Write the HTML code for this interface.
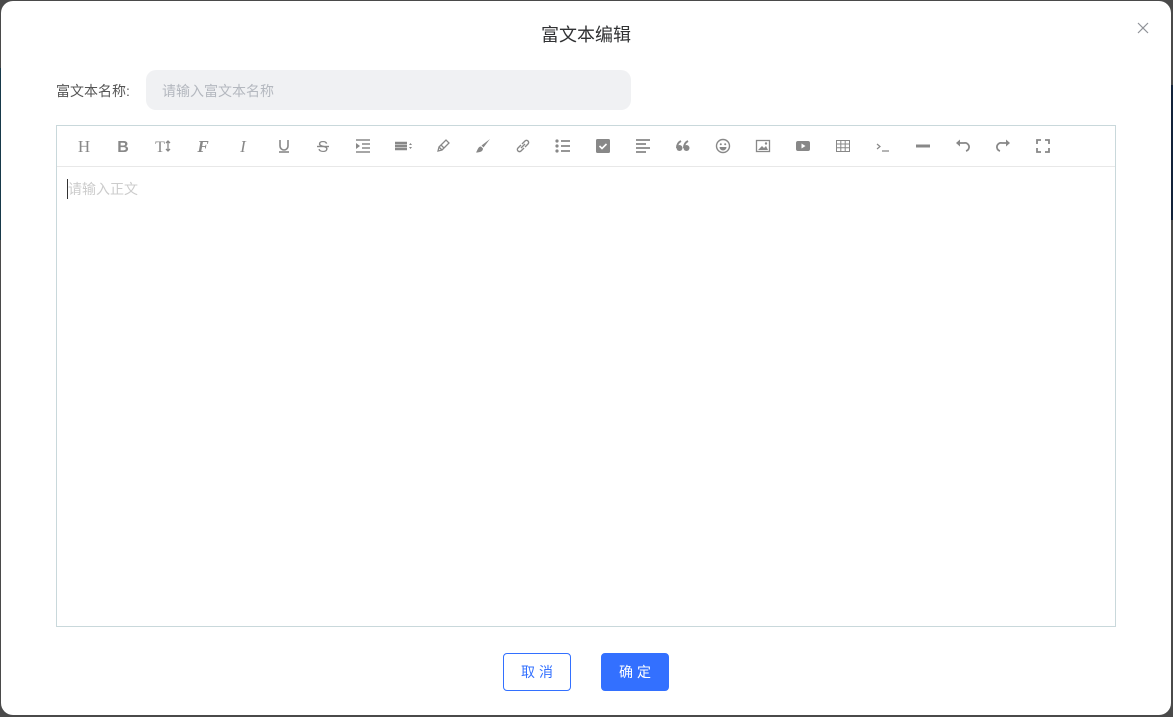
<!DOCTYPE html>
<html><head><meta charset="utf-8"><style>
*{margin:0;padding:0;box-sizing:border-box}
body{width:1173px;height:717px;background:#4a4a4a;position:relative;overflow:hidden;font-family:"Liberation Sans","Noto Sans CJK SC",sans-serif}
.lt{position:absolute;left:0;top:68px;width:3px;height:172px;background:#17394a}
.rt{position:absolute;right:0;top:85px;width:3px;height:135px;background:#13233a}
.dlg{position:absolute;left:1px;top:1px;width:1170px;height:714px;background:#fff;border-radius:12px}
.title{position:absolute;top:20px;left:0;width:100%;text-align:center;font-size:18px;color:#303133}
.close{position:absolute;left:1135px;top:20px;width:14px;height:14px}
.lbl{position:absolute;left:55px;top:80px;font-size:14px;color:#555}
.inp{position:absolute;left:145px;top:69px;width:485px;height:40px;background:#f0f1f3;border-radius:10px;font-size:14px;color:#b4b8bf;padding:11px 16px}
.ed{position:absolute;left:56px;top:125px;width:1060px;height:502px;border:1px solid #c9d8db}
.tb{height:41px;border-bottom:1px solid #e8e8e8;position:relative}
.tb svg{position:absolute;top:12px}
.ph{position:absolute;left:10px;top:53px;font-size:14px;color:#ccc;border-left:1px solid #333;padding-left:0}
.btn{position:absolute;top:653px;width:68px;height:38px;border-radius:4px;font-size:14px;text-align:center;line-height:36px;letter-spacing:4px;text-indent:4px}
.c{left:503px;border:1px solid #3370ff;color:#3370ff;background:#fff}
.o{left:601px;background:#3370ff;color:#fff;border:1px solid #3370ff}
</style></head><body>
<div class="lt"></div><div class="rt"></div>
<div class="dlg">
<div class="title">富文本编辑</div>
<svg class="close" viewBox="0 0 14 14"><path d="M2 2L12 12M12 2L2 12" stroke="#909399" stroke-width="1.2"/></svg>
<div class="lbl">富文本名称:</div>
<div class="inp">请输入富文本名称</div>
</div>
<div class="ed">
<div class="tb">
<svg style="left:19px" width="16" height="16" viewBox="0 0 16 16"><text x="8" y="14" font-size="17" font-family="Liberation Serif" text-anchor="middle" fill="#888">H</text></svg>
<svg style="left:58px" width="16" height="16" viewBox="0 0 16 16"><text x="8" y="14" font-size="16" font-weight="bold" font-family="Liberation Sans" text-anchor="middle" fill="#888">B</text></svg>
<svg style="left:97px" width="18" height="16" viewBox="0 0 18 16"><text x="6" y="14" font-size="16" font-family="Liberation Serif" text-anchor="middle" fill="#888">T</text><path d="M14 3v10M12 5l2-2 2 2M12 11l2 2 2-2" stroke="#888" fill="none" stroke-width="1.3"/></svg>
<svg style="left:138px" width="16" height="16" viewBox="0 0 16 16"><text x="8" y="14" font-size="17" font-style="italic" font-weight="bold" font-family="Liberation Serif" text-anchor="middle" fill="#888">F</text></svg>
<svg style="left:178px" width="16" height="16" viewBox="0 0 16 16"><text x="8" y="14" font-size="17" font-style="italic" font-family="Liberation Serif" text-anchor="middle" fill="#888">I</text></svg>
<svg style="left:219px" width="16" height="16" viewBox="0 0 16 16"><path d="M4 2v6a4 4 0 0 0 8 0V2" stroke="#888" fill="none" stroke-width="1.6"/><path d="M3 14h10" stroke="#888" stroke-width="1.6"/></svg>
<svg style="left:258px" width="16" height="16" viewBox="0 0 16 16"><text x="8" y="14" font-size="16" font-family="Liberation Sans" text-anchor="middle" fill="#888">S</text><path d="M2 8.5h12" stroke="#888" stroke-width="1.4"/></svg>
<svg style="left:298px" width="16" height="16" viewBox="0 0 16 16"><path d="M1 2h14M7 6h8M7 10h8M1 14h14" stroke="#888" stroke-width="1.6"/><path d="M1 5l4 3-4 3z" fill="#888"/></svg>
<svg style="left:337px" width="18" height="16" viewBox="0 0 18 16"><path d="M1 5h12M1 8h12M1 11h12" stroke="#888" stroke-width="2.4"/><path d="M15 7l1.5-2 1.5 2zM15 9l1.5 2 1.5-2z" fill="#888"/></svg>
<svg style="left:378px" width="16" height="16" viewBox="0 0 16 16"><path d="M3 13l1-4 7-7 3 3-7 7zM4 9l3 3M6 7l3 3" stroke="#888" fill="none" stroke-width="1.3"/></svg>
<svg style="left:418px" width="16" height="16" viewBox="0 0 16 16"><path d="M15 1L8.5 9.5 6.5 7.5z" fill="#888"/><path d="M6 8.5c-3 0-3 3-5 6 4 0 7-1 7-4z" fill="#888"/></svg>
<svg style="left:458px" width="16" height="16" viewBox="0 0 16 16"><path d="M6 10l4-4M6 7l-3 3a2.1 2.1 0 0 0 3 3l3-3M10 9l3-3a2.1 2.1 0 0 0-3-3L7 6" stroke="#888" fill="none" stroke-width="1.4"/></svg>
<svg style="left:498px" width="16" height="16" viewBox="0 0 16 16"><circle cx="2" cy="3" r="1.6" fill="#888"/><circle cx="2" cy="8" r="1.6" fill="#888"/><circle cx="2" cy="13" r="1.6" fill="#888"/><path d="M6 3h9M6 8h9M6 13h9" stroke="#888" stroke-width="1.8"/></svg>
<svg style="left:538px" width="16" height="16" viewBox="0 0 16 16"><rect x="1" y="1" width="14" height="14" rx="1.5" fill="#888"/><path d="M4.5 8l2.5 2.5 4.5-4.5" stroke="#fff" fill="none" stroke-width="1.6"/></svg>
<svg style="left:578px" width="16" height="16" viewBox="0 0 16 16"><path d="M1 2h14M1 6h10M1 10h14M1 14h10" stroke="#888" stroke-width="1.8"/></svg>
<svg style="left:618px" width="16" height="16" viewBox="0 0 16 16"><circle cx="4.5" cy="10" r="3" fill="#888"/><circle cx="11.5" cy="10" r="3" fill="#888"/><path d="M2 10c0-4 2-6 4-7M9 10c0-4 2-6 4-7" stroke="#888" fill="none" stroke-width="2"/></svg>
<svg style="left:658px" width="16" height="16" viewBox="0 0 16 16"><circle cx="8" cy="8" r="6.5" stroke="#888" fill="none" stroke-width="1.4"/><circle cx="5.8" cy="6.3" r="1" fill="#888"/><circle cx="10.2" cy="6.3" r="1" fill="#888"/><path d="M4.5 9a3.5 3.5 0 0 0 7 0z" fill="#888"/></svg>
<svg style="left:698px" width="16" height="16" viewBox="0 0 16 16"><rect x="1.5" y="2.5" width="13" height="11" stroke="#888" fill="none" stroke-width="1.3"/><path d="M3 12l4-4 2 2 2-2 2 4z" fill="#888"/><circle cx="11" cy="5.5" r="1.2" fill="#888"/></svg>
<svg style="left:738px" width="16" height="16" viewBox="0 0 16 16"><rect x="1" y="3" width="14" height="10" rx="2" fill="#888"/><path d="M6.5 5.5v5l4-2.5z" fill="#fff"/></svg>
<svg style="left:778px" width="16" height="16" viewBox="0 0 16 16"><path d="M1.5 2.5h13v11h-13zM1.5 6h13M1.5 9.7h13M5.8 2.5v11M10.2 2.5v11" stroke="#888" fill="none" stroke-width="1"/></svg>
<svg style="left:818px" width="16" height="16" viewBox="0 0 16 16"><path d="M2 6l3 2.5-3 2.5M7 13h7" stroke="#888" fill="none" stroke-width="1.2"/></svg>
<svg style="left:858px" width="16" height="16" viewBox="0 0 16 16"><path d="M1 8h14" stroke="#888" stroke-width="3"/></svg>
<svg style="left:898px" width="16" height="16" viewBox="0 0 16 16"><path d="M4 5h5a4 4 0 0 1 2 8" stroke="#888" fill="none" stroke-width="1.8"/><path d="M1 5l4-3.5v7z" fill="#888"/></svg>
<svg style="left:938px" width="16" height="16" viewBox="0 0 16 16"><path d="M12 5H7a4 4 0 0 0-2 8" stroke="#888" fill="none" stroke-width="1.8"/><path d="M15 5l-4-3.5v7z" fill="#888"/></svg>
<svg style="left:978px" width="16" height="16" viewBox="0 0 16 16"><path d="M2 6V2h4M10 2h4v4M14 10v4h-4M6 14H2v-4" stroke="#888" fill="none" stroke-width="1.8"/></svg>
</div>
<div class="ph">请输入正文</div>
</div>
<div class="btn c">取消</div>
<div class="btn o">确定</div>
</body></html>
